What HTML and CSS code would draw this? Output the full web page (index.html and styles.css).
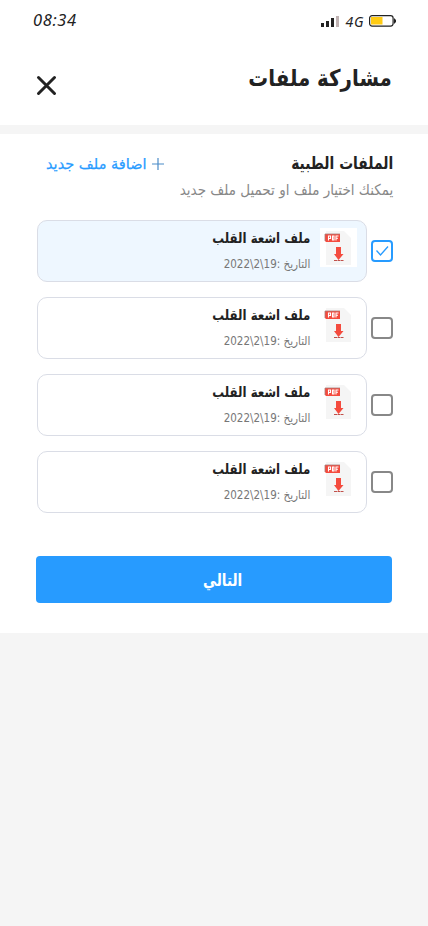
FILE: index.html
```html
<!DOCTYPE html>
<html lang="ar" dir="rtl">
<head>
<meta charset="utf-8">
<meta name="viewport" content="width=device-width, initial-scale=1">
<title>مشاركة ملفات</title>
<link rel="stylesheet" href="styles.css">
</head>
<body>
<svg class="defs" aria-hidden="true">
  <symbol id="pdf" viewBox="0 0 37 39">
    <path d="M6 3H24L31 10V37H6Z" fill="#f5f5f5"/>
    <path d="M5 6H20V14H6L5 13Z" fill="#f44b3e"/>
    <path d="M5 6H20M5 6V13" stroke="#a67f7c" stroke-width=".8" fill="none"/>
    <path d="M8.500 12.500V8H10.500V10.500H8.500M12.500 8H14V12H12.500ZM16 12.500V8H18.500M16 10.200H18" stroke="#fff" stroke-width="1.100" fill="none"/>
    <path d="M16 19H21V26H23.500L18.500 32L14 26H16Z" fill="#f44b3e"/>
    <path d="M14 32.500H23.500" stroke="#c0504a" stroke-width="1" stroke-dasharray="3 .5"/>
  </symbol>
</svg>
<header class="header">
  <div class="status" dir="ltr">
    <span class="time">08:34</span>
    <div class="signals">
      <svg width="19" height="12" viewBox="0 0 19 12"><path d="M0 8h3v4H0zM5 6h3v6H5zM10 3h3v9h-3z" fill="#222"/><path d="M15 1h3v11h-3z" fill="#c0b3b3"/></svg>
      <span class="network">4G</span>
      <svg width="28" height="12" viewBox="0 0 28 12"><rect x=".6" y=".6" width="23.500" height="10.500" rx="2.500" fill="#fff" stroke="#222" stroke-width="1.200"/><path d="M2 2h11.500v7.500H2z" fill="#ffcb13"/><path d="M25 3.500h1v1h1v3h-1v1h-1z" fill="#222"/></svg>
    </div>
  </div>
  <div class="title-row">
    <h1><span class="fit title">مشاركة ملفات</span></h1>
    <svg class="close" width="21" height="21" viewBox="0 0 21 21"><path d="M2.500 2.500 18.500 18.500M18.500 2.500 2.500 18.500" stroke="#222" stroke-width="3" stroke-linecap="round"/></svg>
  </div>
</header>
<main class="sheet">
  <div class="section-head">
    <h2><span class="fit heading">الملفات الطبية</span></h2>
    <div class="add"><svg width="12" height="12" viewBox="0 0 12 12"><path d="M6 0V12M0 6H12" stroke="#4b8cc8" stroke-width="1.200"/></svg><span>اضافة ملف جديد</span></div>
  </div>
  <p class="hint"><span class="fit hint-text">يمكنك اختيار ملف او تحميل ملف جديد</span></p>
  <div class="files">
    <div class="row"><span class="check on"><svg width="14" height="12" viewBox="0 0 14 12"><path d="M1.500 5.500 5.500 10 13 1.500" fill="none" stroke="#279bff" stroke-width="1.300"/></svg></span><div class="card selected"><svg class="pdf"><use href="#pdf"/></svg><div class="info"><span class="name fit">ملف اشعة القلب</span><span class="date fit">التاريخ :19\2\2022</span></div></div></div>
    <div class="row"><span class="check"></span><div class="card"><svg class="pdf"><use href="#pdf"/></svg><div class="info"><span class="name fit">ملف اشعة القلب</span><span class="date fit">التاريخ :19\2\2022</span></div></div></div>
    <div class="row"><span class="check"></span><div class="card"><svg class="pdf"><use href="#pdf"/></svg><div class="info"><span class="name fit">ملف اشعة القلب</span><span class="date fit">التاريخ :19\2\2022</span></div></div></div>
    <div class="row"><span class="check"></span><div class="card"><svg class="pdf"><use href="#pdf"/></svg><div class="info"><span class="name fit">ملف اشعة القلب</span><span class="date fit">التاريخ :19\2\2022</span></div></div></div>
  </div>
  <button class="next"><span class="next-label">التالي</span></button>
</main>
</body>
</html>
```
FILE: styles.css
```css
* { box-sizing: border-box; }
body { margin: 0; background: #f5f5f5; color: #222; font-family: "DejaVu Sans", sans-serif; }
svg { display: block; flex: none; }
.defs { width: 0; height: 0; position: absolute; }
h1, h2, p { margin: 0; }
.fit { display: inline-block; white-space: nowrap; transform-origin: right center; }
.title { transform: scaleX(.86); }
.heading { transform: scaleX(.815); }
.hint-text { transform: scaleX(.9); }
.header { height: 125px; background: #fff; }
.status { height: 42px; padding: 0 31px 0 33px; display: flex; align-items: center; justify-content: space-between; font-family: "Noto Sans", sans-serif; font-style: italic; }
.time { font-size: 16.5px; line-height: 20px; letter-spacing: .6px; margin-top: -3px; }
.signals { display: flex; align-items: center; gap: 5px; }
.network { font-size: 14px; letter-spacing: .6px; margin-left: 1px; }
.title-row { height: 71px; padding: 0 36px; display: flex; align-items: center; justify-content: space-between; }
h1 { font-size: 23px; line-height: 30px; }
.close { margin-top: 16px; }
.sheet { margin-top: 9px; height: 499px; background: #fff; padding: 15px 35px 0 36px; }
.section-head { height: 28px; padding-left: 10px; display: flex; align-items: center; justify-content: space-between; }
h2 { font-size: 17px; line-height: 26px; }
.add { display: flex; align-items: center; gap: 6px; color: #279bff; font-size: 14.5px; -webkit-text-stroke: .25px currentColor; margin-top: 2px; }
.hint { height: 28px; line-height: 26px; font-size: 15px; color: #888; }
.files { margin-top: 15px; display: grid; gap: 15px; }
.row { display: flex; align-items: center; gap: 4px; padding-left: 1px; }
.check { width: 22px; height: 22px; flex: none; border: 2px solid #888; border-radius: 4px; display: flex; align-items: center; justify-content: center; }
.check.on { border-color: #279bff; }
.card { flex: 1; height: 62px; border: 1px solid #dadde6; border-radius: 10px; padding: 7px 9px; display: flex; gap: 10px; background: #fff; }
.card.selected { background: #eef7ff; }
.pdf { width: 37px; height: 39px; background: #fff; }
.info { display: flex; flex-direction: column; align-items: flex-start; }
.name { font-size: 14px; line-height: 20px; font-weight: bold; transform: scaleX(.843); }
.date { font-size: 11.5px; line-height: 18px; margin-top: 7px; color: #777; transform: scaleX(.9); }
.next { width: 356px; height: 47px; margin: 43px 1px 0 0; padding: 0 0 0 18px; border: 0; border-radius: 4px; background: #279bff; color: #fff; font: bold 17px "DejaVu Sans", sans-serif; display: flex; align-items: center; justify-content: center; }
.next-label { transform: scaleX(.8); }
```
